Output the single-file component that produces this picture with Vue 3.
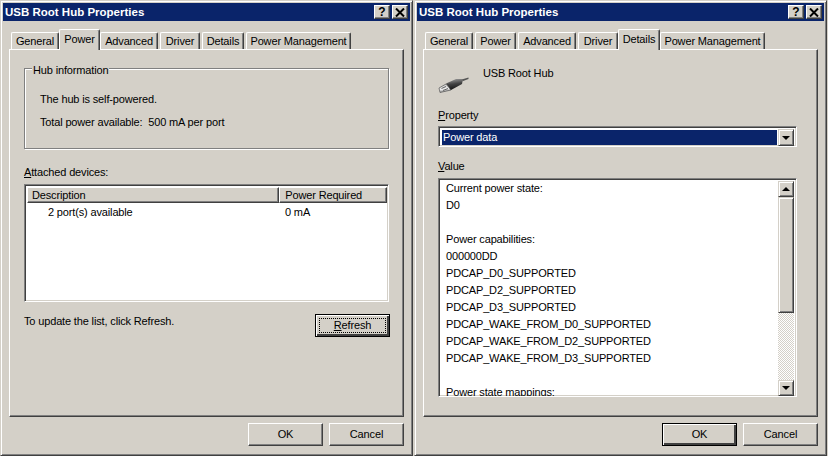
<script setup>
const tabs = [
  { label: 'General', width: 48 },
  { label: 'Power', width: 41 },
  { label: 'Advanced', width: 58 },
  { label: 'Driver', width: 40 },
  { label: 'Details', width: 42 },
  { label: 'Power Management', width: 105 }
]
const lines = [
  'Current power state:', 'D0', '\u00a0', 'Power capabilities:', '000000DD',
  'PDCAP_D0_SUPPORTED', 'PDCAP_D2_SUPPORTED', 'PDCAP_D3_SUPPORTED',
  'PDCAP_WAKE_FROM_D0_SUPPORTED', 'PDCAP_WAKE_FROM_D2_SUPPORTED',
  'PDCAP_WAKE_FROM_D3_SUPPORTED', '\u00a0', 'Power state mappings:'
]
const windows = [
  { id: 'power', active: 1 },
  { id: 'details', active: 4 }
]
</script>

<template>
  <div class="page">
    <section v-for="w in windows" :key="w.id" class="window">
      <header class="titlebar">
        <span class="title">USB Root Hub Properties</span>
        <span class="caps">
          <span class="cap help">?</span>
          <span class="cap">
            <svg width="10" height="9" viewBox="0 0 10 9"><path d="M1 0.5 L9 8.5 M9 0.5 L1 8.5" stroke="#000" stroke-width="2" fill="none"/></svg>
          </span>
        </span>
      </header>

      <nav class="tabs">
        <span
          v-for="(t, i) in tabs"
          :key="t.label"
          class="tab"
          :class="{ active: i === w.active }"
          :style="{ width: t.width + 'px' }"
        >{{ t.label }}</span>
      </nav>

      <div class="panel" :class="w.id">
        <template v-if="w.id === 'power'">
          <div class="group">
            <span class="legend">Hub information</span>
            <p class="g1">The hub is self-powered.</p>
            <p class="g2">Total power available:&nbsp; 500 mA per port</p>
          </div>
          <div class="label attached"><u>A</u>ttached devices:</div>
          <div class="list sunken">
            <div class="list-head">
              <span class="col c1">Description</span>
              <span class="col c2">Power Required</span>
            </div>
            <div class="list-row">
              <span class="r1">2 port(s) available</span>
              <span class="r2">0 mA</span>
            </div>
          </div>
          <div class="refresh-row">
            <span class="hint">To update the list, click Refresh.</span>
            <span class="btn default"><span class="focus-ring"><u>R</u>efresh</span></span>
          </div>
        </template>

        <template v-else>
          <div class="device">
            <svg class="usb" width="32" height="26" viewBox="0 0 32 26">
              <defs>
                <linearGradient id="body" x1="0.3" y1="0" x2="0.5" y2="1">
                  <stop offset="0" stop-color="#9a9a9a"/>
                  <stop offset="0.45" stop-color="#444"/>
                  <stop offset="1" stop-color="#111"/>
                </linearGradient>
                <linearGradient id="tip" x1="0.3" y1="0" x2="0.5" y2="1">
                  <stop offset="0" stop-color="#c8c8c8"/>
                  <stop offset="0.6" stop-color="#eee"/>
                  <stop offset="1" stop-color="#777"/>
                </linearGradient>
              </defs>
              <path d="M1 18 L8 14 L13 20 L2 22.5 Z" fill="url(#tip)" stroke="#555" stroke-width="0.7"/>
              <path d="M3.5 18.5 L8 16.5 M5 20.5 L10 18.5" stroke="#555" stroke-width="0.9"/>
              <path d="M8 13.5 L18 9 L25 9 L24 14 L13 20 Z" fill="url(#body)"/>
              <path d="M24.5 9.2 L30.5 7.5 L30.5 9 L24.5 11.2 Z" fill="#555"/>
            </svg>
            <span class="device-name">USB Root Hub</span>
          </div>
          <div class="label property"><u>P</u>roperty</div>
          <div class="combo sunken">
            <span class="combo-value">Power data</span>
            <span class="sbtn combo-btn"><i class="arrow down"></i></span>
          </div>
          <div class="label value"><u>V</u>alue</div>
          <div class="textbox sunken">
            <div class="lines">
              <div v-for="(l, i) in lines" :key="i" class="line">{{ l }}</div>
            </div>
            <div class="scroll">
              <span class="sbtn"><i class="arrow up"></i></span>
              <span class="thumb"></span>
              <span class="track"></span>
              <span class="sbtn"><i class="arrow down"></i></span>
            </div>
          </div>
        </template>
      </div>

      <footer class="actions">
        <span class="btn" :class="{ default: w.id === 'details' }">OK</span>
        <span class="btn">Cancel</span>
      </footer>
    </section>
  </div>
</template>

<style>
html, body { margin: 0; background: #d4d0c8; }
</style>

<style scoped>
.page {
  display: flex;
  gap: 1px;
  width: 828px;
  height: 456px;
  overflow: hidden;
  background: #d4d0c8;
  font: 11px/14px "Liberation Sans", Arial, sans-serif;
  letter-spacing: -0.15px;
  color: #000;
}
.window {
  box-sizing: border-box;
  width: 413px;
  height: 456px;
  padding: 2px;
  background: #d4d0c8;
  border: 1px solid;
  border-color: #d4d0c8 #404040 #404040 #d4d0c8;
  box-shadow: inset 1px 1px 0 #fff, inset -1px -1px 0 #808080;
  display: flex;
  flex-direction: column;
}
.titlebar {
  height: 18px;
  flex: none;
  background: #0a246a;
  color: #fff;
  font-weight: 700;
  font-size: 11.5px;
  letter-spacing: 0;
  display: flex;
  justify-content: space-between;
  align-items: center;
  padding: 0 2px;
}
.caps { display: flex; gap: 2px; }
.cap {
  box-sizing: border-box;
  width: 16px;
  height: 14px;
  background: #d4d0c8;
  color: #000;
  border: 1px solid;
  border-color: #fff #404040 #404040 #fff;
  box-shadow: inset -1px -1px 0 #808080;
  display: flex;
  align-items: center;
  justify-content: center;
}
.help { font: 700 12px/12px "Liberation Sans", sans-serif; }

.tabs {
  display: flex;
  align-items: flex-end;
  gap: 2px;
  height: 20px;
  margin: 8px 0 0 8px;
  flex: none;
  position: relative;
  z-index: 1;
}
.tab {
  box-sizing: border-box;
  height: 17px;
  padding-top: 1px;
  text-align: center;
  white-space: nowrap;
  background: #d4d0c8;
  border-top: 1px solid #fff;
  border-left: 1px solid #fff;
  border-right: 1px solid #404040;
  border-radius: 2px 2px 0 0;
  box-shadow: inset -1px 0 0 #808080;
}
.tab.active {
  height: 21px;
  margin: 0 -2px -1px;
  padding-top: 2px;
  position: relative;
}

.panel {
  box-sizing: border-box;
  height: 368px;
  flex: none;
  margin: 0 6px;
  padding: 18px 14px 0;
  border: 1px solid;
  border-color: #fff #404040 #404040 #fff;
  box-shadow: inset -1px -1px 0 #808080;
}
.panel.details { padding-top: 16px; }

.group {
  box-sizing: border-box;
  height: 81px;
  width: 365px;
  border: 1px solid #808080;
  box-shadow: inset 1px 1px 0 #fff, 1px 1px 0 #fff;
  padding-left: 15px;
}
.legend {
  display: block;
  width: fit-content;
  margin: -6px 0 0 -8px;
  padding: 0 1px;
  background: #d4d0c8;
}
.group p { margin: 0; }
.g1 { padding-top: 15px; }
.g2 { padding-top: 9px; }

.label { line-height: 14px; }
.attached { margin-top: 16px; }

.sunken {
  box-sizing: border-box;
  border: 1px solid;
  border-color: #808080 #fff #fff #808080;
  box-shadow: inset 1px 1px 0 #404040, inset -1px -1px 0 #d4d0c8;
}
.list {
  width: 365px;
  height: 118px;
  margin-top: 5px;
  padding: 2px 1px 1px 2px;
  background: #fff;
}
.list-head { display: flex; height: 16px; background: #d4d0c8; }
.col {
  box-sizing: border-box;
  height: 16px;
  padding: 0 0 0 4px;
  border: 1px solid;
  border-color: #fff #404040 #404040 #fff;
  box-shadow: inset -1px -1px 0 #808080;
}
.c1 { width: 253px; }
.c2 { width: 108px; padding-left: 5px; }
.list-row { display: flex; padding-top: 2px; }
.r1 { width: 258px; padding-left: 21px; box-sizing: border-box; }

.refresh-row {
  display: flex;
  justify-content: space-between;
  margin: 12px -1px 0 0;
}

.btn {
  box-sizing: border-box;
  width: 75px;
  height: 23px;
  padding-bottom: 1px;
  background: #d4d0c8;
  display: flex;
  align-items: center;
  justify-content: center;
  border: 1px solid;
  border-color: #fff #404040 #404040 #fff;
  box-shadow: inset -1px -1px 0 #808080;
}
.btn.default {
  border-color: #000;
  box-shadow: inset 1px 1px 0 #fff, inset -2px -2px 0 #404040;
}
.focus-ring {
  box-sizing: border-box;
  width: 67px;
  height: 15px;
  border: 1px dotted #000;
  display: flex;
  align-items: center;
  justify-content: center;
}

.actions {
  display: flex;
  justify-content: flex-end;
  gap: 6px;
  margin: 6px 6px 0 0;
}

.device { display: flex; height: 25px; }
.usb { margin: 4px 0 0; flex: none; }
.device-name { margin-left: 13px; }
.property { margin-top: 17px; }
.combo {
  width: 359px;
  height: 21px;
  margin-top: 4px;
  padding: 2px;
  display: flex;
  background: #fff;
}
.combo-value {
  flex: 1;
  height: 15px;
  margin: 1px 1px 0;
  background: #0a246a;
  color: #fff;
  padding-left: 1px;
  line-height: 14px;
}
.sbtn {
  box-sizing: border-box;
  flex: none;
  width: 16px;
  height: 16px;
  background: #d4d0c8;
  border: 1px solid;
  border-color: #d4d0c8 #404040 #404040 #d4d0c8;
  box-shadow: inset 1px 1px 0 #fff, inset -1px -1px 0 #808080;
  display: flex;
  align-items: center;
  justify-content: center;
}
.combo-btn { height: 17px; }
.arrow { width: 0; height: 0; border-left: 4px solid transparent; border-right: 4px solid transparent; }
.arrow.down { border-top: 4px solid #000; }
.arrow.up { border-bottom: 4px solid #000; }

.value { margin-top: 12px; }
.textbox {
  width: 359px;
  height: 219px;
  margin-top: 5px;
  padding: 2px;
  display: flex;
  background: #fff;
}
.lines {
  flex: 1;
  height: 215px;
  overflow: hidden;
  padding-left: 5px;
}
.line { height: 17px; line-height: 15px; white-space: nowrap; }
.scroll { display: flex; flex-direction: column; width: 16px; height: 215px; flex: none; }
.thumb {
  box-sizing: border-box;
  height: 116px;
  flex: none;
  background: #d4d0c8;
  border: 1px solid;
  border-color: #d4d0c8 #404040 #404040 #d4d0c8;
  box-shadow: inset 1px 1px 0 #fff, inset -1px -1px 0 #808080;
}
.track {
  flex: 1;
  background: repeating-conic-gradient(#d4d0c8 0 25%, #fff 0 50%) 0 0 / 2px 2px;
}
</style>
